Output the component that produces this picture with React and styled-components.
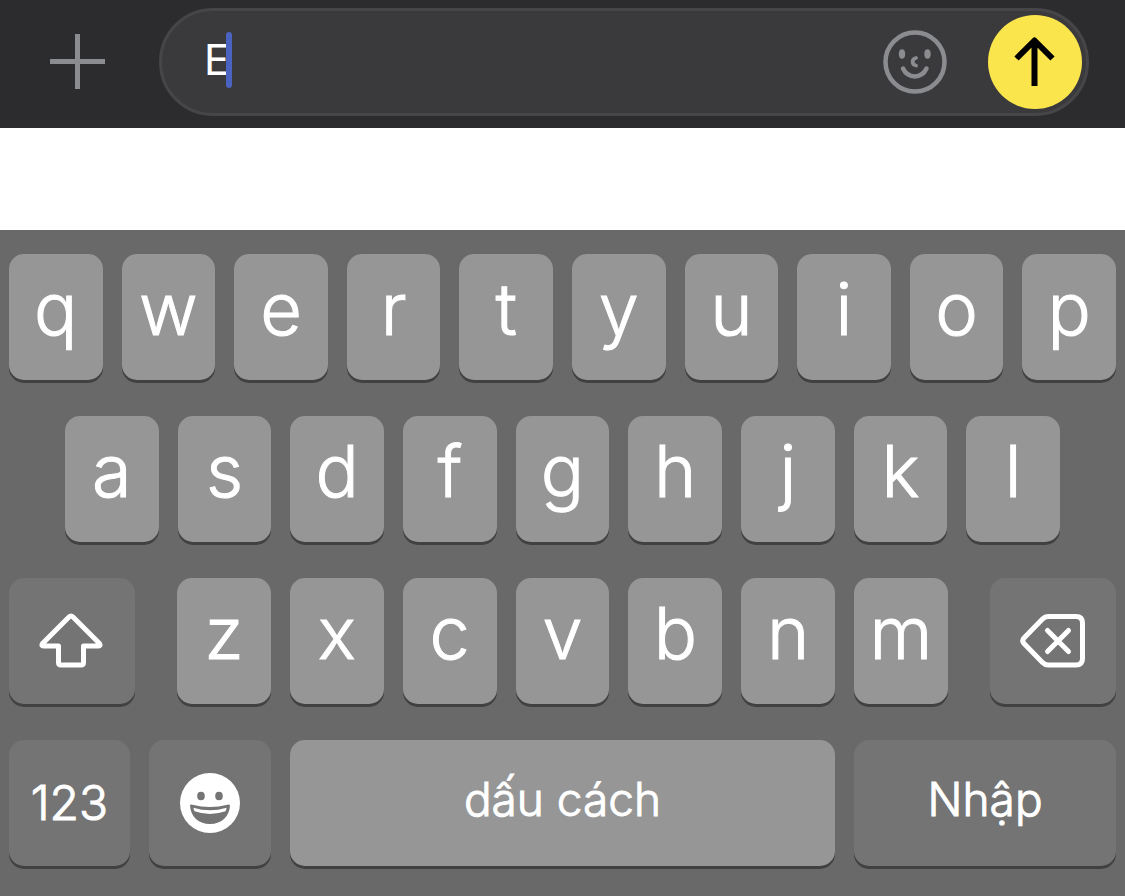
import { useState } from 'react';
import styled, { createGlobalStyle } from 'styled-components';

const GlobalStyle = createGlobalStyle`
  * {
    box-sizing: border-box;
  }
  body {
    margin: 0;
    background: #ffffff;
    font-family: Inter, Roboto, 'Liberation Sans', sans-serif;
  }
  button {
    border: 0;
    padding: 0;
    margin: 0;
    font: inherit;
    color: inherit;
    cursor: pointer;
  }
  svg {
    display: block;
  }
`;

const Screen = styled.main`
  display: flex;
  flex-direction: column;
  gap: 102px;
`;

// message bar
const Composer = styled.form`
  display: flex;
  align-items: center;
  gap: 39px;
  padding: 8px 36px 12px;
  background: #2c2c2e;
`;
const PlainButton = styled.button`
  flex: none;
  background: none;
`;
const Field = styled.div`
  flex: 1;
  display: flex;
  align-items: center;
  padding: 4px 4px 4px 42px;
  border: 3px solid #464648;
  border-radius: 54px;
  background: #3a3a3c;
`;
const TextArea = styled.label`
  flex: 1;
  display: flex;
  align-items: center;
  min-width: 0;
  padding-bottom: 4px;
`;
const TextInput = styled.input`
  field-sizing: content;
  max-width: 100%;
  padding: 0;
  border: 0;
  outline: 0;
  background: none;
  color: #ffffff;
  caret-color: transparent;
  font-family: inherit;
  font-size: 42px;
  line-height: 56px;
`;
const Caret = styled.span`
  flex: none;
  width: 6px;
  height: 56px;
  margin-left: -3px;
  border-radius: 3px;
  background: #4a62c0;
`;
const SendButton = styled.button`
  flex: none;
  display: flex;
  align-items: center;
  justify-content: center;
  width: 94px;
  height: 94px;
  margin-left: 41px;
  border-radius: 50%;
  background: #fae64c;
`;

// keyboard
const Keyboard = styled.section`
  display: flex;
  flex-direction: column;
  gap: 36px;
  padding: 24px 9px 30px;
  background: #696969;
  color: #ffffff;
`;
const KeyRow = styled.div`
  display: grid;
  grid-template-columns: ${({ $columns }) => $columns};
  gap: ${({ $gap }) => $gap || 19}px;
  padding: 0 ${({ $inset }) => $inset || 0}px;
`;
const Key = styled.button`
  display: flex;
  align-items: center;
  justify-content: center;
  min-width: 0;
  height: 126px;
  border-radius: 15px;
  background: ${({ $dark }) => ($dark ? '#747474' : '#969696')};
  box-shadow: 0 3px 0 #414141;
  font-weight: 300;
  -webkit-text-stroke: 1px #ffffff;
`;
const LetterKey = styled(Key)`
  padding-bottom: 16px;
  font-size: 72px;
  line-height: 88px;
`;
const LabelKey = styled(Key)`
  padding-bottom: ${({ $raised }) => ($raised ? 8 : 0)}px;
  font-size: ${({ $raised }) => ($raised ? 46 : 48)}px;
  line-height: 60px;
`;

const PlusIcon = () => (
  <svg width="84" height="84" viewBox="0 0 84 84" stroke="#8b8c90" strokeWidth="5">
    <path d="M41.5 14V69M14 41.500H69" />
  </svg>
);

const StickerIcon = () => (
  <svg width="64" height="64" viewBox="0 0 64 64" fill="none" stroke="#8b8c90" strokeWidth="4.500" strokeLinecap="round">
    <circle cx="32" cy="32" r="29.500" />
    <ellipse cx="19" cy="24" rx="3.200" ry="4.800" fill="#8b8c90" stroke="none" />
    <ellipse cx="44.500" cy="24" rx="3.200" ry="4.800" fill="#8b8c90" stroke="none" />
    <path d="M33 28C28.500 29 28.500 34.500 33 35.500" strokeWidth="3.800" />
    <path d="M20 38.500C25 49 38.500 49 43.500 38.500" />
  </svg>
);

const SendIcon = () => (
  <svg width="94" height="94" viewBox="0 0 94 94" fill="none" stroke="#000000" strokeWidth="6" strokeLinejoin="round">
    <path d="M46.500 71V26M28.500 43.500L46.500 25.500L64.500 43.500" />
  </svg>
);

const ShiftIcon = () => (
  <svg width="66" height="58" viewBox="0 0 66 58" fill="none" stroke="#ffffff" strokeWidth="5" strokeLinejoin="round">
    <path d="M30 5L3.500 31.500Q2 34 4.500 34H19.500V50.500Q19.500 53 22 53H42Q44.500 53 44.500 50.500V34H59.500Q62 34 60.500 31.500L34 5Q32 3 30 5Z" />
  </svg>
);

const DeleteIcon = () => (
  <svg width="66" height="58" viewBox="0 0 66 58" fill="none" stroke="#ffffff" strokeWidth="5" strokeLinecap="round" strokeLinejoin="round">
    <path d="M28 4.500H56Q62.500 4.500 62.500 11V46.500Q62.500 53 56 53H28Q25 53 22.500 50.500L4 31.500Q1.500 28.700 4 26L22.500 7Q25 4.500 28 4.500Z" />
    <path d="M27.500 18.500L48.500 39.500M48.500 18.500L27.500 39.500" />
  </svg>
);

const EmojiIcon = () => (
  <svg width="60" height="60" viewBox="0 0 60 60" fill="#747474">
    <circle cx="30" cy="30" r="30" fill="#ffffff" />
    <ellipse cx="21" cy="23" rx="3.800" ry="4.300" />
    <ellipse cx="39" cy="23" rx="3.800" ry="4.300" />
    <path d="M10 32.500Q10.500 31 12.500 31.700Q30 36.500 47.500 31.700Q49.500 31 50 32.500C49.500 43 42 51 30 51S10.500 43 10 32.500Z" />
    <path d="M13.500 34.800Q30 39.800 46.500 34.800Q46.500 36.500 45.500 38.200Q30 43.600 14.500 38.200Q13.500 36.500 13.500 34.800Z" fill="#ffffff" />
  </svg>
);

const Letters = ({ letters, onType }) =>
  letters.split('').map((letter) => (
    <LetterKey key={letter} type="button" onClick={() => onType(letter)}>
      {letter}
    </LetterKey>
  ));

export default function App() {
  const [message, setMessage] = useState('E');
  const type = (text) => setMessage((prev) => prev + text);

  return (
    <>
      <GlobalStyle />
      <Screen>
        <Composer onSubmit={(e) => e.preventDefault()}>
          <PlainButton type="button" aria-label="Thêm">
            <PlusIcon />
          </PlainButton>
          <Field>
            <TextArea>
              <TextInput
                aria-label="Tin nhắn"
                value={message}
                onChange={(e) => setMessage(e.target.value)}
              />
              <Caret />
            </TextArea>
            <PlainButton type="button" aria-label="Nhãn dán">
              <StickerIcon />
            </PlainButton>
            <SendButton type="submit" aria-label="Gửi">
              <SendIcon />
            </SendButton>
          </Field>
        </Composer>

        <Keyboard>
          <KeyRow $columns="repeat(10, 1fr)">
            <Letters letters="qwertyuiop" onType={type} />
          </KeyRow>
          <KeyRow $columns="repeat(9, 1fr)" $inset={56}>
            <Letters letters="asdfghjkl" onType={type} />
          </KeyRow>
          <KeyRow $columns="126fr 770fr 126fr" $gap={42}>
            <Key $dark type="button" aria-label="Shift">
              <ShiftIcon />
            </Key>
            <KeyRow $columns="repeat(7, 1fr)">
              <Letters letters="zxcvbnm" onType={type} />
            </KeyRow>
            <Key $dark type="button" aria-label="Xoá" onClick={() => setMessage((prev) => prev.slice(0, -1))}>
              <DeleteIcon />
            </Key>
          </KeyRow>
          <KeyRow $columns="121fr 122fr 546fr 262fr">
            <LabelKey $dark type="button">123</LabelKey>
            <Key $dark type="button" aria-label="Biểu tượng cảm xúc">
              <EmojiIcon />
            </Key>
            <LabelKey $raised type="button" onClick={() => type(' ')}>
              dấu cách
            </LabelKey>
            <LabelKey $dark $raised type="button">Nhập</LabelKey>
          </KeyRow>
        </Keyboard>
      </Screen>
    </>
  );
}
